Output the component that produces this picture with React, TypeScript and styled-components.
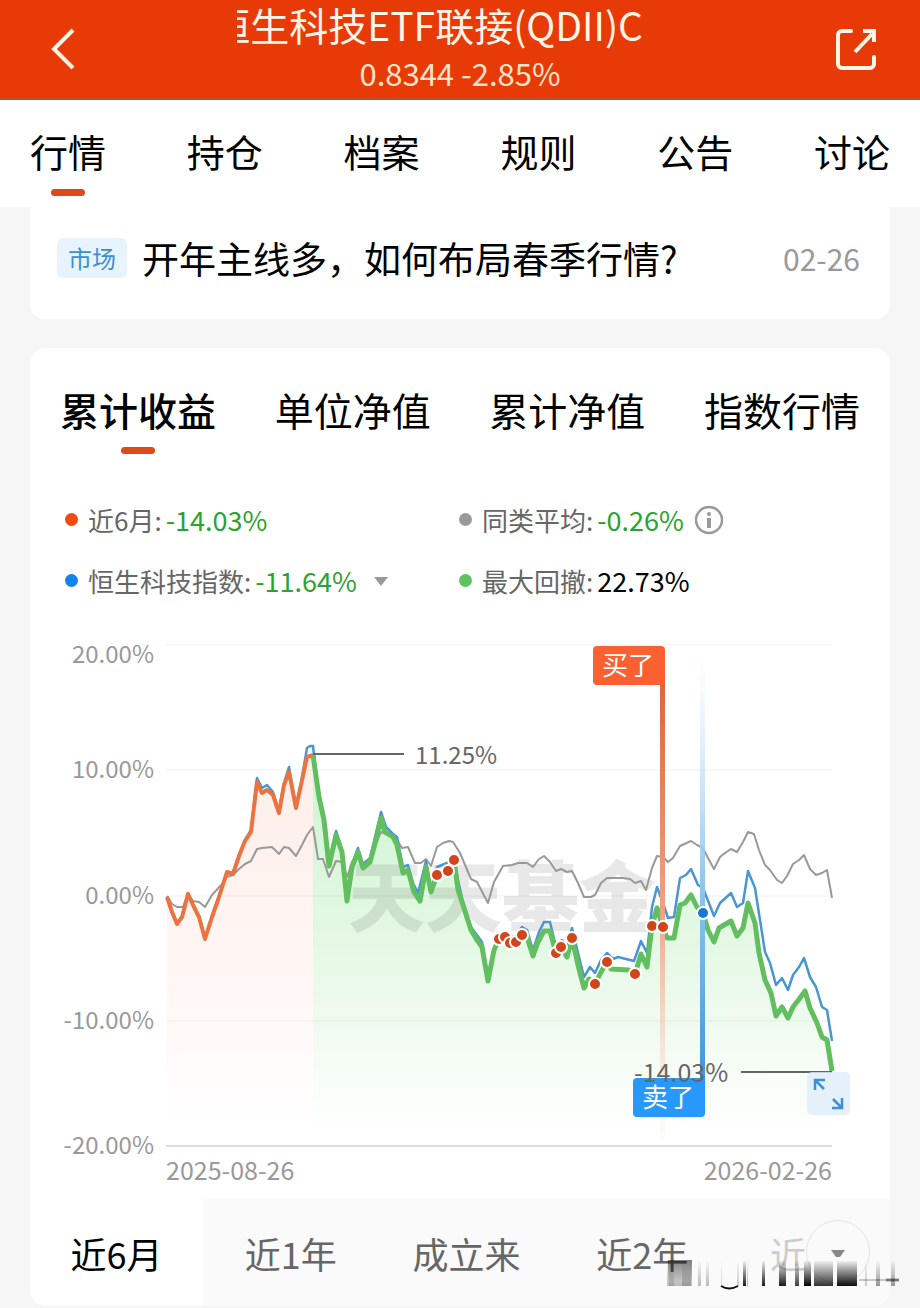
import React from 'react';
import styled, { createGlobalStyle } from 'styled-components';

const GlobalStyle = createGlobalStyle`
  * { box-sizing: border-box; }
  body {
    margin: 0;
    background: #f6f6f6;
    font-family: 'Noto Sans CJK SC', 'Noto Sans', sans-serif;
    color: #000;
  }
  button { font: inherit; color: inherit; border: 0; padding: 0; background: none; cursor: pointer; }
`;

const Page = styled.div`
  display: flex;
  flex-direction: column;
`;

const Header = styled.header`
  display: flex;
  align-items: center;
  justify-content: space-between;
  height: 100px;
  padding: 0 40px;
  background: #e83a06;
  border-bottom: 2px solid #b5532f;
  color: #fff4e6;
`;

const HeaderButton = styled.button`
  display: flex;
  align-items: center;
  justify-content: center;
  width: 48px;
  height: 48px;
`;

const Heading = styled.div`
  display: flex;
  flex-direction: column;
  align-items: center;
  height: 100px;
`;

const Marquee = styled.h1`
  display: flex;
  justify-content: flex-end;
  width: 406px;
  margin: 0 40px 0 0;
  overflow: hidden;
  white-space: nowrap;
  font-size: 39px;
  line-height: 50px;
  font-weight: 400;
`;

const Quote = styled.div`
  font-size: 31px;
  line-height: 48px;
  color: #ffe3c8;
`;

const MainTabs = styled.nav`
  display: flex;
  justify-content: space-between;
  height: 107px;
  padding: 24px 30px 0;
  background: #fff;
`;

const Tab = styled.button<{ $active?: boolean }>`
  position: relative;
  height: 80px;
  padding-bottom: 26px;
  font-size: 38px;
  line-height: 54px;
  white-space: nowrap;
  &::after {
    content: '';
    display: ${(p) => (p.$active ? 'block' : 'none')};
    position: absolute;
    left: 50%;
    bottom: 8px;
    width: 34px;
    height: 7px;
    margin-left: -17px;
    border-radius: 4px;
    background: #dd4b1a;
  }
`;

const SeriesTab = styled(Tab)<{ $active?: boolean }>`
  font-size: 39px;
  font-weight: ${(p) => (p.$active ? 500 : 400)};
`;

const NewsCard = styled.a`
  display: flex;
  align-items: center;
  height: 112px;
  margin: 0 30px 29px;
  padding: 0 30px 10px 27px;
  border-radius: 0 0 14px 14px;
  background: #fff;
  color: inherit;
  text-decoration: none;
`;

const Tag = styled.span`
  padding: 0 11px;
  border-radius: 6px;
  background: #e7f4fd;
  color: #3f8fcb;
  font-size: 24px;
  line-height: 40px;
`;

const NewsTitle = styled.span`
  flex: 1;
  margin-left: 15px;
  font-size: 37px;
  line-height: 48px;
  white-space: nowrap;
`;

const NewsDate = styled.time`
  color: #999;
  font-size: 30px;
  line-height: 40px;
`;

const ChartCard = styled.section`
  margin: 0 30px;
  border-radius: 16px;
  background: #fff;
`;

const SeriesTabs = styled.div`
  display: flex;
  justify-content: space-between;
  padding: 34px 30px 0;
`;

const Legend = styled.div`
  display: grid;
  grid-template-columns: 394px 1fr;
  row-gap: 20px;
  padding: 37px 35px 0;
`;

const LegendItem = styled.div`
  display: flex;
  align-items: center;
  height: 41px;
  color: #666;
  font-size: 26px;
  white-space: nowrap;
`;

const Dot = styled.i<{ $color: string }>`
  width: 13px;
  height: 13px;
  margin-right: 10px;
  border-radius: 50%;
  background: ${(p) => p.$color};
`;

const Value = styled.span<{ $color: string }>`
  margin-left: 4px;
  color: ${(p) => p.$color};
  font-size: 27px;
`;

const SmallButton = styled.button`
  display: flex;
  margin-left: 10px;
`;

const ChartArea = styled.div`
  position: relative;
  margin-top: 29px;
  svg { display: block; width: 100%; }
`;

const ExpandButton = styled.button`
  position: absolute;
  right: 40px;
  bottom: 84px;
  width: 43px;
  height: 43px;
  border-radius: 5px;
  background: rgba(222, 236, 250, 0.8);
`;

const RangeTabs = styled.div`
  position: relative;
  display: flex;
  height: 107px;
  border-radius: 0 0 16px 16px;
  background: #fafafa;
`;

const RangeTab = styled.button<{ $active?: boolean; $faded?: boolean }>`
  flex: ${(p) => (p.$faded ? '0 0 76px' : p.$active ? '0 0 173px' : '1 1 0')};
  border-radius: 0 0 0 16px;
  background: ${(p) => (p.$active ? '#fff' : 'none')};
  color: ${(p) => (p.$active ? '#000' : p.$faded ? '#ccc' : '#666')};
  font-size: 36px;
  line-height: 104px;
  text-align: ${(p) => (p.$faded ? 'right' : 'center')};
  white-space: nowrap;
`;

const MoreRanges = styled.button`
  display: flex;
  align-items: center;
  justify-content: center;
  width: 64px;
  height: 64px;
  margin: 21px 20px 0 0;
  padding-top: 4px;
  border: 1px solid #e4e4e4;
  border-radius: 50%;
`;

const Smear = styled.svg`
  position: absolute;
  right: -10px;
  bottom: 14px;
  width: 236px;
  height: 34px;
`;

const GRID = [645, 770, 896, 1021, 1146];
const Y_LABELS = ['20.00%', '10.00%', '0.00%', '-10.00%', '-20.00%'];

const GAIN =
  '167,897 172,912 177,924 182,917 188,894 193,905 199,917 205,939 212,917 218,900 227,872 233,874 239,856 245,841 251,832 257,782 262,793 267,790 273,795 279,813 284,785 289,772 296,808 301,785 307,757 313,755';
const DRAWDOWN =
  '313,755 319,797 324,820 329,866 336,835 342,852 347,901 352,867 358,852 363,868 370,862 376,840 381,818 385,832 393,837 397,845 403,873 408,870 414,892 420,901 426,867 431,892 437,875 448,871 454,860 458,890 463,905 471,930 477,940 482,947 488,981 494,950 499,939 505,937 510,943 516,942 522,934 527,937 533,956 538,942 544,931 550,931 556,953 561,947 567,957 572,938 578,965 584,988 589,979 595,984 601,972 607,962 611,969 629,970 635,974 641,954 647,967 652,926 657,908 663,927 667,938 674,938 680,905 685,903 691,895 697,907 703,913 708,930 714,942 719,928 731,921 737,936 743,928 748,903 755,923 759,953 765,980 771,993 776,1016 782,1007 788,1018 793,1007 800,998 805,991 810,1008 817,1023 822,1037 827,1040 832,1071';
const INDEX =
  '167,897 172,911 177,923 182,917 188,893 193,905 199,917 205,938 212,916 218,899 227,872 233,873 239,855 245,840 251,830 257,778 262,788 267,785 273,792 279,812 284,783 289,767 296,807 301,783 307,748 310,746 313,746 318,793 324,818 329,862 336,831 342,850 347,897 352,865 358,848 363,866 370,858 376,833 381,812 386,827 393,834 397,837 403,867 408,865 413,883 418,893 426,861 431,890 437,867 447,863 454,857 458,880 463,902 471,927 482,942 488,978 494,948 499,937 510,938 516,936 522,927 527,930 533,950 539,932 544,922 550,922 556,947 562,940 567,948 572,928 578,953 584,977 590,967 595,973 601,960 607,953 613,959 618,957 634,961 641,941 647,953 652,907 657,887 663,903 668,918 674,917 680,878 686,875 691,869 698,885 703,888 714,916 720,903 731,893 737,907 743,903 748,871 755,888 760,920 765,952 770,963 776,985 782,978 788,990 793,975 799,967 804,958 810,977 816,987 822,1007 827,1010 832,1041';
const AVERAGE =
  '167,896 172,904 177,907 183,907 188,894 193,901 199,902 205,907 212,895 222,884 227,877 233,875 239,869 245,864 251,861 257,849 262,848 272,847 279,854 284,847 289,848 296,856 302,845 307,835 313,827 318,859 323,859 329,877 336,861 342,862 347,877 352,862 358,853 363,863 370,858 376,843 381,832 386,834 393,837 397,840 402,848 408,847 415,863 421,863 426,859 431,866 437,847 443,843 449,841 453,842 460,853 471,879 477,882 488,903 494,882 503,866 512,865 518,863 527,863 533,867 539,859 544,856 550,862 556,871 561,869 567,872 572,871 578,883 584,897 591,897 595,895 601,883 607,878 623,878 630,879 635,883 641,881 646,890 652,868 657,856 663,857 668,862 673,858 680,846 691,841 697,845 703,848 708,858 714,869 720,857 725,853 731,849 737,852 743,842 748,832 754,834 759,850 765,865 770,870 777,880 782,883 787,876 793,864 799,860 804,855 810,869 816,875 822,873 827,870 832,898';

const TRADES = [
  [437, 875], [448, 871], [454, 860], [499, 939], [505, 937], [510, 943], [516, 942], [522, 935],
  [556, 953], [561, 947], [572, 938], [595, 984], [607, 962], [635, 974], [652, 926], [663, 927],
];

const SMEAR_BARS: [number, number, number][] = [
  [3, 25, 0.25], [5, 5, 0.15], [18, 9, 0.2], [34, 3, 0.25], [42, 3, 0.25], [57, 1, 0.15], [73, 2, 0.2],
  [79, 3, 0.9], [83, 1, 0.3], [98, 3, 0.9], [115, 7, 0.9], [131, 4, 0.75], [140, 7, 1], [150, 19, 0.8],
  [173, 20, 0.95], [201, 2, 0.2], [212, 4, 0.4], [227, 4, 0.4],
];

function PerformanceChart() {
  return (
    <svg viewBox="30 630 860 569" role="img" aria-label="累计收益走势">
      <defs>
        <linearGradient id="gain" x1="0" y1="755" x2="0" y2="1135" gradientUnits="userSpaceOnUse">
          <stop offset="0" stopColor="#fdeee7" />
          <stop offset="0.5" stopColor="#fff5f3" />
          <stop offset="1" stopColor="#fff" />
        </linearGradient>
        <linearGradient id="drawdown" x1="0" y1="755" x2="0" y2="1135" gradientUnits="userSpaceOnUse">
          <stop offset="0" stopColor="#cdf5cf" />
          <stop offset="0.5" stopColor="#e5f8e5" />
          <stop offset="1" stopColor="#fff" />
        </linearGradient>
        <linearGradient id="buy" x1="0" y1="685" x2="0" y2="1140" gradientUnits="userSpaceOnUse">
          <stop offset="0" stopColor="#e0663b" />
          <stop offset="0.5" stopColor="#eda387" />
          <stop offset="1" stopColor="#fdf6ec" stopOpacity="0.3" />
        </linearGradient>
        <linearGradient id="sell" x1="0" y1="655" x2="0" y2="1080" gradientUnits="userSpaceOnUse">
          <stop offset="0" stopColor="#cfe6f8" stopOpacity="0" />
          <stop offset="0.5" stopColor="#9bcaee" />
          <stop offset="1" stopColor="#3d96dc" />
        </linearGradient>
      </defs>

      <g fontSize="24" fill="#999" textAnchor="end">
        {Y_LABELS.map((label, i) => (
          <text key={label} x="154" y={GRID[i] + (i === 0 ? 18 : 8)}>{label}</text>
        ))}
      </g>
      <g fontSize="25" fill="#999">
        <text x="832" y="1180" textAnchor="end">2026-02-26</text>
        <text x="166" y="1180">2025-08-26</text>
      </g>

      <polygon points={`167,1135 ${GAIN} 313,1135`} fill="url(#gain)" />
      <polygon points={`313,1135 ${DRAWDOWN} 832,1135`} fill="url(#drawdown)" />
      {GRID.map((y) => (
        <line key={y} x1="166" x2="832" y1={y} y2={y} stroke={y === 1146 ? '#ddd' : '#000'} strokeOpacity={y === 1146 ? 1 : 0.06} strokeWidth={y === 1146 ? 2 : 1} />
      ))}
      <text x="348" y="926" fontSize="77" fontWeight="900" fill="#000" fillOpacity="0.09">天天基金</text>

      <g fill="none" strokeLinejoin="round">
        <polyline points={AVERAGE} stroke="#999" strokeWidth="2" />
        <polyline points={INDEX} stroke="#4a96d2" strokeWidth="2.5" />
        <polyline points={GAIN} stroke="#ea7340" strokeWidth="4" />
        <polyline points={DRAWDOWN} stroke="#62bf60" strokeWidth="5" />
      </g>

      <rect x="660" y="680" width="5" height="460" fill="url(#buy)" />
      <rect x="700" y="655" width="5" height="430" fill="url(#sell)" />

      <g fill="#d2451a" stroke="#fff" strokeWidth="2">
        {TRADES.map(([x, y]) => <circle key={x} cx={x} cy={y} r="6" />)}
        <circle cx="703" cy="913" r="6" fill="#1878cf" />
      </g>

      <g stroke="#666" strokeWidth="2">
        <line x1="313" x2="404" y1="754" y2="754" />
        <line x1="741" x2="832" y1="1072" y2="1072" />
      </g>

      <path d="M597 646H661a4 4 0 0 1 4 4V685H597a4 4 0 0 1-4-4V650a4 4 0 0 1 4-4Z" fill="#fb6130" />
      <path d="M637 1078H705V1113a4 4 0 0 1-4 4H637a4 4 0 0 1-4-4V1082a4 4 0 0 1 4-4Z" fill="#2799fc" />
      <g fontSize="26" fill="#fff">
        <text x="602" y="675">买了</text>
        <text x="642" y="1107">卖了</text>
      </g>
      <g fontSize="24" fill="#666">
        <text x="415" y="764">11.25%</text>
        <text x="634" y="1082" fontSize="25">-14.03%</text>
      </g>
    </svg>
  );
}

export default function App() {
  return (
    <Page>
      <GlobalStyle />
      <Header>
        <HeaderButton aria-label="返回">
          <svg width="48" height="48" fill="none" stroke="currentColor" strokeWidth="4">
            <path d="M33 5 14 24 33 43" />
          </svg>
        </HeaderButton>
        <Heading>
          <Marquee>恒生科技ETF联接(QDII)C</Marquee>
          <Quote>0.8344 -2.85%</Quote>
        </Heading>
        <HeaderButton aria-label="分享">
          <svg width="48" height="48" fill="none" stroke="currentColor" strokeWidth="4" strokeLinecap="round">
            <path d="M19 6H10a4 4 0 0 0-4 4V39a4 4 0 0 0 4 4H38a4 4 0 0 0 4-4V32" />
            <path d="M23 27 40 9M31 6H42V17" strokeLinecap="butt" />
          </svg>
        </HeaderButton>
      </Header>

      <MainTabs>
        {['行情', '持仓', '档案', '规则', '公告', '讨论'].map((name, i) => (
          <Tab key={name} $active={i === 0}>{name}</Tab>
        ))}
      </MainTabs>

      <NewsCard href="#news">
        <Tag>市场</Tag>
        <NewsTitle>开年主线多，如何布局春季行情?</NewsTitle>
        <NewsDate>02-26</NewsDate>
      </NewsCard>

      <ChartCard>
        <SeriesTabs>
          {['累计收益', '单位净值', '累计净值', '指数行情'].map((name, i) => (
            <SeriesTab key={name} $active={i === 0}>{name}</SeriesTab>
          ))}
        </SeriesTabs>

        <Legend>
          <LegendItem><Dot $color="#f04a12" />近6月:<Value $color="#2ba32f">-14.03%</Value></LegendItem>
          <LegendItem>
            <Dot $color="#999" />同类平均:<Value $color="#2ba32f">-0.26%</Value>
            <SmallButton aria-label="说明">
              <svg width="30" height="30" fill="none" stroke="#999" strokeWidth="2.5">
                <circle cx="15" cy="15" r="13" />
                <path d="M15 13V23" strokeWidth="4" />
                <circle cx="15" cy="9" r="2" fill="#999" stroke="none" />
              </svg>
            </SmallButton>
          </LegendItem>
          <LegendItem>
            <Dot $color="#1285ea" />恒生科技指数:<Value $color="#2ba32f">-11.64%</Value>
            <SmallButton aria-label="选择指数">
              <svg width="28" height="12"><path d="M7 2H21L14 11Z" fill="#999" /></svg>
            </SmallButton>
          </LegendItem>
          <LegendItem><Dot $color="#5bc460" />最大回撤:<Value $color="#000">22.73%</Value></LegendItem>
        </Legend>

        <ChartArea>
          <PerformanceChart />
          <ExpandButton aria-label="全屏">
            <svg viewBox="0 0 43 43" fill="none" stroke="#3f8fd6" strokeWidth="2.5">
              <path d="M18 8H8V18M8 8 17 17M25 36H35V26M35 36 26 27" />
            </svg>
          </ExpandButton>
        </ChartArea>

        <RangeTabs>
          <RangeTab $active>近6月</RangeTab>
          <RangeTab>近1年</RangeTab>
          <RangeTab>成立来</RangeTab>
          <RangeTab>近2年</RangeTab>
          <RangeTab $faded>近</RangeTab>
          <MoreRanges aria-label="更多区间">
            <svg width="16" height="10"><path d="M1 1H15L10 8H6Z" fill="#888" /></svg>
          </MoreRanges>
          <Smear viewBox="0 0 236 34" aria-hidden="true">
            <defs>
              <linearGradient id="smear" x1="0" y1="0" x2="0" y2="1">
                <stop offset="0" stopColor="#000" stopOpacity="0.05" />
                <stop offset="1" stopColor="#000" />
              </linearGradient>
              <linearGradient id="smearTop" x1="0" y1="0" x2="0" y2="1">
                <stop offset="0" stopColor="#000" stopOpacity="0.5" />
                <stop offset="1" stopColor="#000" stopOpacity="0" />
              </linearGradient>
            </defs>
            <rect x="4" y="2" width="24" height="22" fill="url(#smearTop)" />
            {SMEAR_BARS.map(([x, w, o]) => (
              <rect key={x} x={x} y="3" width={w} height="25" fill="url(#smear)" opacity={o} />
            ))}
            <path d="M57 28Q65 33 74 28" fill="none" stroke="#111" strokeWidth="2" />
            <path d="M195 22H235" stroke="#000" strokeOpacity="0.2" strokeWidth="2" />
            <path d="M222 22H235" stroke="#000" strokeOpacity="0.4" strokeWidth="3" />
          </Smear>
        </RangeTabs>
      </ChartCard>
    </Page>
  );
}
